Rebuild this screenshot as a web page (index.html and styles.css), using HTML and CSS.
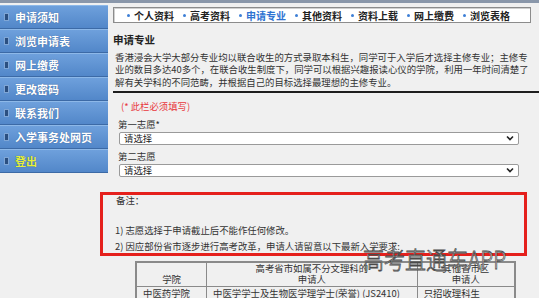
FILE: index.html
```html
<!DOCTYPE html>
<html lang="zh-CN">
<head>
    <meta charset="UTF-8">
    <title>申请专业</title>
    <link rel="stylesheet" href="styles.css">
</head>
<body>
    <div class="page">
        <ul class="side-menu">
            <li><span class="dot"></span>申请须知</li>
            <li><span class="dot"></span>浏览申请表</li>
            <li><span class="dot"></span>网上缴费</li>
            <li><span class="dot"></span>更改密码</li>
            <li><span class="dot"></span>联系我们</li>
            <li><span class="dot"></span>入学事务处网页</li>
            <li class="logout"><span class="dot"></span>登出</li>
        </ul>

        <div class="main">
            <div class="tabs">
                <span class="tab">个人资料</span>
                <span class="tab">高考资料</span>
                <span class="tab active">申请专业</span>
                <span class="tab">其他资料</span>
                <span class="tab">资料上载</span>
                <span class="tab">网上缴费</span>
                <span class="tab">浏览表格</span>
            </div>

            <h2 class="title">申请专业</h2>
            <p class="intro">香港浸会大学大部分专业均以联合收生的方式录取本科生，同学可于入学后才选择主修专业；主修专业的数目多达40多个，在联合收生制度下，同学可以根据兴趣报读心仪的学院，利用一年时间清楚了解有关学科的不同范畴，并根据自己的目标选择最理想的主修专业。</p>

            <div class="rule"></div>

            <p class="required">(* 此栏必须填写)</p>

            <div class="field">
                <label>第一志愿*</label>
                <div class="select">请选择
                    <svg class="chev" width="8" height="6" viewBox="0 0 8 6"><path d="M1 1.5 L4 4.5 L7 1.5" fill="none" stroke="#222" stroke-width="1.6"/></svg>
                </div>
            </div>
            <div class="field">
                <label>第二志愿</label>
                <div class="select">请选择
                    <svg class="chev" width="8" height="6" viewBox="0 0 8 6"><path d="M1 1.5 L4 4.5 L7 1.5" fill="none" stroke="#222" stroke-width="1.6"/></svg>
                </div>
            </div>

            <div class="notes">
                <span class="mark"></span>
                <p class="notes-head">备注：</p>
                <p class="note">1) 志愿选择于申请截止后不能作任何修改。</p>
                <p class="note">2) 因应部份省市逐步进行高考改革，申请人请留意以下最新入学要求:</p>
            </div>

            <table class="req-table">
                <tr>
                    <th class="c1">学院</th>
                    <th class="c2">高考省市如属不分文理科的<br>申请人</th>
                    <th class="c3">其他省市区<br>申请人</th>
                </tr>
                <tr>
                    <td>中医药学院</td>
                    <td><a href="#">中医学学士及生物医学理学士(荣誉) (JS2410)</a></td>
                    <td>只招收理科生</td>
                </tr>
            </table>
        </div>
    </div>

    <div class="watermark">高考直通车APP</div>
</body>
</html>
```

FILE: styles.css
```css
* {
    margin: 0;
    padding: 0;
    box-sizing: border-box;
}

body {
    background: #f0f0f0;
    color: #333;
    font-family: "Noto Sans CJK SC", "Noto Sans", sans-serif;
    font-size: 9.4px;
    border-top: 3px solid #8a97aa;
    overflow: hidden;
    height: 298px;
}

.page {
    display: flex;
    align-items: flex-start;
}

/* left menu */
.side-menu {
    list-style: none;
    width: 108px;
    margin-top: 2px;
    flex-shrink: 0;
}

.side-menu li {
    height: 24px;
    display: flex;
    align-items: center;
    gap: 6px;
    padding-left: 4px;
    background: linear-gradient(#6ea0dc, #5287c9);
    border-top: 1px solid #8db8e8;
    border-bottom: 1px solid #3c6aa6;
    color: #fff;
    font-size: 11px;
    font-weight: bold;
    text-shadow: 0 0 1px #2c5288;
    white-space: nowrap;
}

.side-menu .dot {
    width: 5px;
    height: 8px;
    background: #2b4f80;
    border: 1px solid #7fa6d6;
}

.side-menu .logout {
    color: #e6f03a;
}

/* main column */
.main {
    flex: 1;
    margin-left: 5px;
    position: relative;
}

.tabs {
    margin-top: 4px;
    margin-right: 8px;
    height: 16px;
    background: #fff;
    border: 1px solid #8c8c8c;
    box-shadow: inset 1px 1px 0 #d0d0d0;
    display: flex;
    align-items: center;
    padding-left: 13px;
    gap: 9px;
}

.tab {
    font-size: 10px;
    font-weight: bold;
    color: #222;
    display: flex;
    align-items: center;
    gap: 4px;
    white-space: nowrap;
    flex-shrink: 0;
}

.tab::before {
    content: "";
    width: 3px;
    height: 3px;
    border-radius: 50%;
    background: #3d7fd6;
}

.tab.active {
    color: #2f73d2;
}

.title {
    margin-top: 11px;
    font-size: 10.5px;
    font-weight: bold;
    color: #222;
    line-height: 12px;
}

.intro {
    margin-top: 5px;
    padding: 0 4px 0 2px;
    line-height: 12.3px;
    color: #333;
}

.rule {
    margin-top: 3px;
    height: 2px;
    background: #1e1e1e;
}

.required {
    margin-top: 7px;
    padding-left: 8px;
    color: #e8383d;
    line-height: 12px;
}

.field {
    padding-left: 5px;
}

.field label {
    display: block;
    margin-top: 6px;
    line-height: 12px;
    color: #333;
}

.select {
    margin-top: 2px;
    margin-left: 1px;
    width: 400px;
    height: 13px;
    background: #fff;
    border: 1px solid #9a9a9a;
    border-radius: 2px;
    display: flex;
    align-items: center;
    justify-content: space-between;
    padding: 0 4px;
    line-height: 11px;
    color: #222;
}

.field + .field label {
    margin-top: 5px;
}

.notes {
    position: relative;
    margin-top: 17px;
    padding-left: 2px;
}

.notes p {
    line-height: 12px;
    color: #333;
}

.notes-head {
    padding-left: 1px;
    margin-bottom: 18px;
}

.note + .note {
    margin-top: 4px;
}

.mark {
    position: absolute;
    left: -13px;
    top: -2px;
    width: 427px;
    height: 64px;
    border: 3px solid #e5201c;
}

.req-table {
    margin-top: 9px;
    margin-left: 22px;
    width: 381px;
    border-collapse: collapse;
    border: 2px solid #8a8a8a;
}

.req-table th,
.req-table td {
    border: 1px solid #8a8a8a;
    color: #333;
}

.req-table th {
    font-weight: normal;
    text-align: center;
    vertical-align: bottom;
    padding: 0 2px;
    line-height: 11.5px;
}

.req-table td {
    padding: 1px 6px 2px;
    line-height: 11px;
    white-space: nowrap;
}

.req-table .c1 { width: 71px; }
.req-table .c2 { width: 211px; }
.req-table .c3 { width: 99px; }

.req-table a {
    color: #333;
    text-decoration: underline;
}

.watermark {
    position: absolute;
    left: 363px;
    top: 244px;
    font-size: 21px;
    font-weight: 300;
    color: #fff;
    -webkit-text-stroke: 0.7px #4a4a4a;
    transform: scaleY(1.15);
}
```
